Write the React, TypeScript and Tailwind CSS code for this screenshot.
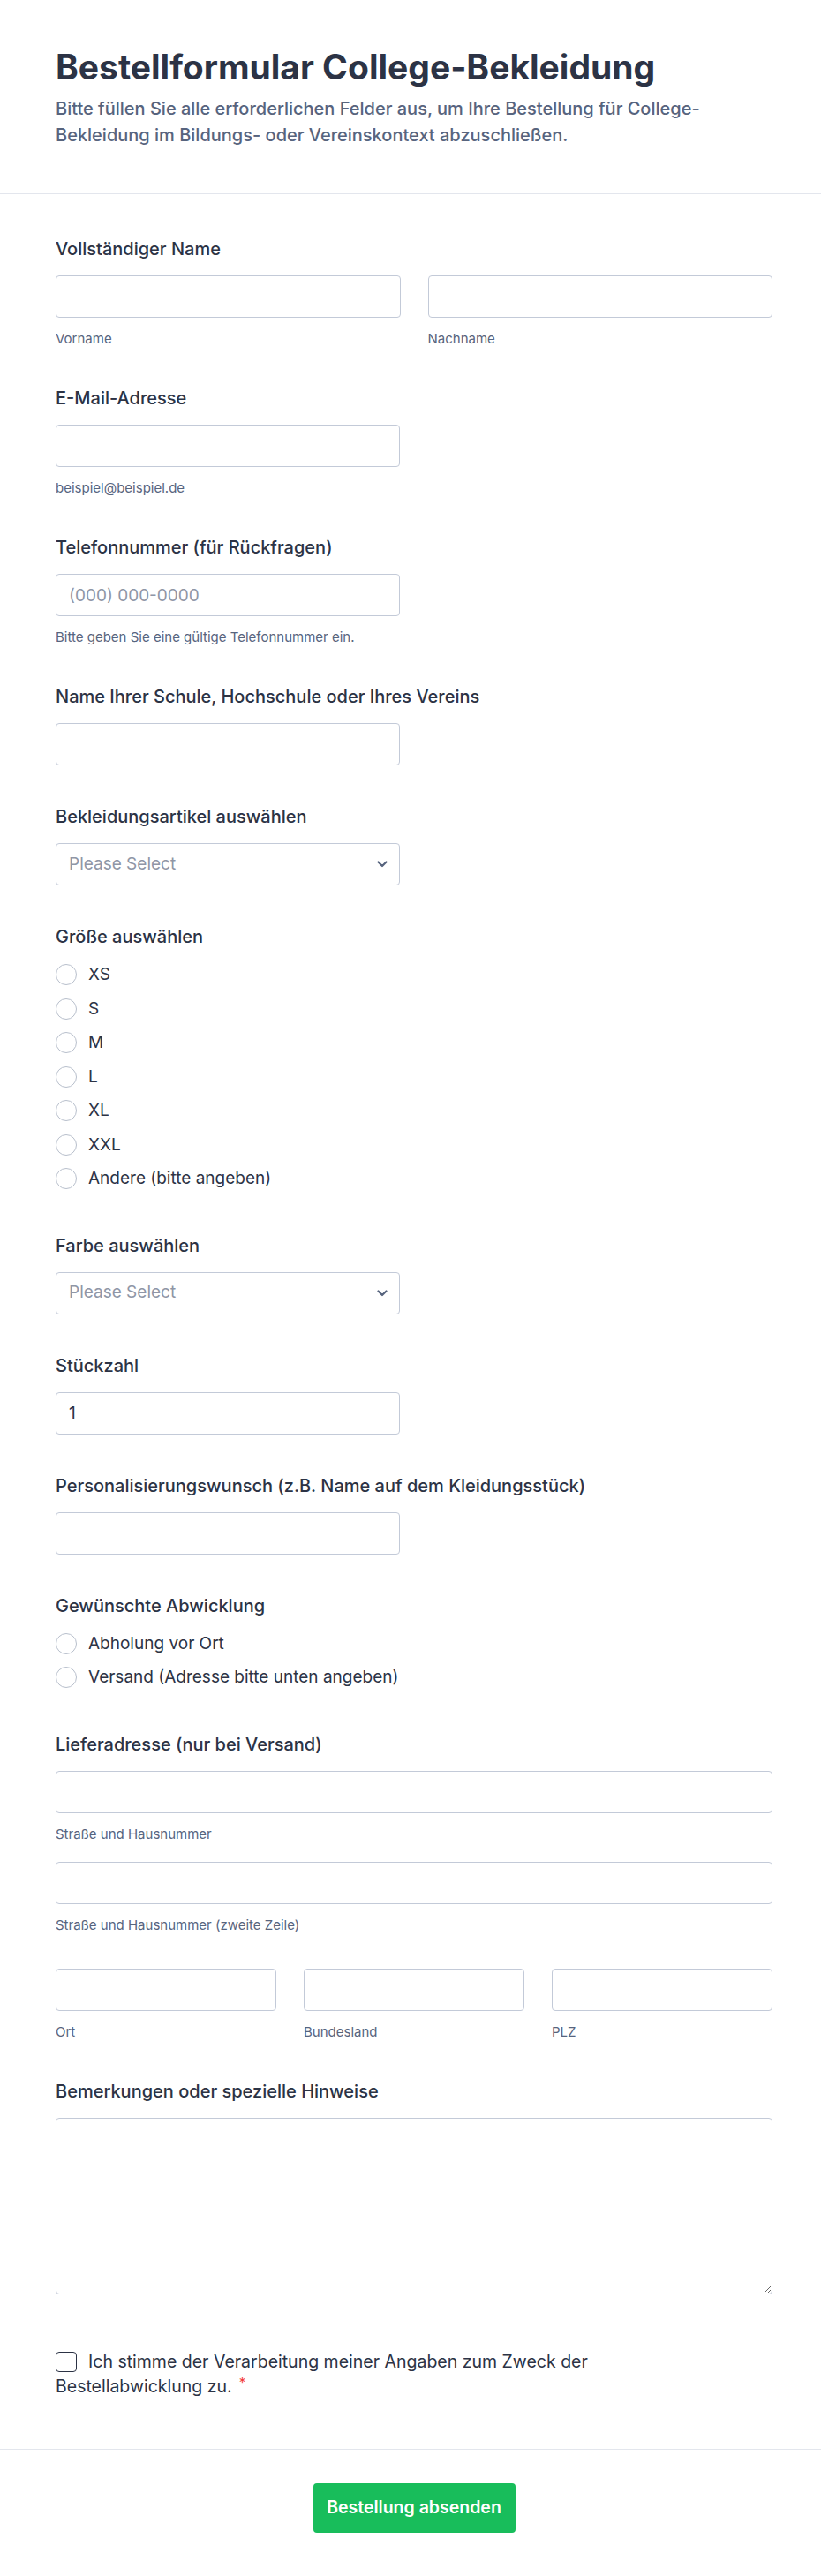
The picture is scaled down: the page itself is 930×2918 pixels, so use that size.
import React from 'react';

const Label = ({ children }: { children: React.ReactNode }) => (
  <div className="text-[20px] leading-6 font-medium text-[#2c3345]">{children}</div>
);

const Sub = ({ children }: { children: React.ReactNode }) => (
  <div className="mt-[15px] text-[15px] leading-[18px] text-[#57647e]">{children}</div>
);

const TextInput = ({
  placeholder,
  value,
  half,
}: {
  placeholder?: string;
  value?: string;
  half?: boolean;
}) => (
  <input
    type="text"
    placeholder={placeholder}
    defaultValue={value}
    className={`mt-[18px] block h-12 ${half ? 'w-[390px]' : 'w-full'} rounded-[4px] border border-[#c3cad8] bg-white px-[14px] text-[19px] text-[#2c3345] outline-none placeholder:text-[#8f96a6]`}
  />
);

const Select = () => (
  <div className="mt-[18px] flex h-12 w-[390px] items-center justify-between rounded-[4px] border border-[#c3cad8] bg-white pl-[14px] pr-[13px]">
    <span className="text-[19px] text-[#8f96a6]">Please Select</span>
    <svg width="12" height="8" viewBox="0 0 12 8" fill="none">
      <path d="M1.5 1.5 L6 6 L10.5 1.5" stroke="#57647e" strokeWidth="2.2" strokeLinecap="round" strokeLinejoin="round" />
    </svg>
  </div>
);

const Radio = ({ label }: { label: string }) => (
  <div className="flex h-[38.5px] items-center gap-[13px]">
    <span className="h-6 w-6 shrink-0 rounded-full border border-[#b8bfcc] bg-white" />
    <span className="text-[19px] text-[#2c3345]">{label}</span>
  </div>
);

const sizes = ['XS', 'S', 'M', 'L', 'XL', 'XXL', 'Andere (bitte angeben)'];

export default function App() {
  return (
    <div className="min-h-screen bg-white font-['Inter','Noto_Sans',sans-serif] antialiased">
      <header className="border-b border-[#e3e6ed] pt-[54px] pb-[51px]">
        <div className="ml-[63px] w-[812px]">
          <h1 className="text-[39px] leading-[44px] font-bold text-[#2c3345]">
            Bestellformular College-Bekleidung
          </h1>
          <p className="mt-[10px] text-[20px] leading-[30px] font-medium text-[#57647e]">
            Bitte füllen Sie alle erforderlichen Felder aus, um Ihre Bestellung für College-Bekleidung im
            Bildungs- oder Vereinskontext abzuschließen.
          </p>
        </div>
      </header>

      <form className="pt-[50px] pb-[57px]">
        <div className="ml-[63px] w-[812px]">
          <div className="mb-[46px]">
            <Label>Vollständiger Name</Label>
            <div className="grid grid-cols-2 gap-x-[31px]">
              <div>
                <TextInput />
                <Sub>Vorname</Sub>
              </div>
              <div>
                <TextInput />
                <Sub>Nachname</Sub>
              </div>
            </div>
          </div>

          <div className="mb-[46px]">
            <Label>E-Mail-Adresse</Label>
            <TextInput half />
            <Sub>beispiel@beispiel.de</Sub>
          </div>

          <div className="mb-[46px]">
            <Label>Telefonnummer (für Rückfragen)</Label>
            <TextInput half placeholder="(000) 000-0000" />
            <Sub>Bitte geben Sie eine gültige Telefonnummer ein.</Sub>
          </div>

          <div className="mb-[46px]">
            <Label>Name Ihrer Schule, Hochschule oder Ihres Vereins</Label>
            <TextInput half />
          </div>

          <div className="mb-[46px]">
            <Label>Bekleidungsartikel auswählen</Label>
            <Select />
          </div>

          <div className="mb-[44px]">
            <Label>Größe auswählen</Label>
            <div className="mt-[12px]">
              {sizes.map((s) => (
                <Radio key={s} label={s} />
              ))}
            </div>
          </div>

          <div className="mb-[46px]">
            <Label>Farbe auswählen</Label>
            <Select />
          </div>

          <div className="mb-[46px]">
            <Label>Stückzahl</Label>
            <TextInput half value="1" />
          </div>

          <div className="mb-[46px]">
            <Label>Personalisierungswunsch (z.B. Name auf dem Kleidungsstück)</Label>
            <TextInput half />
          </div>

          <div className="mb-[44px]">
            <Label>Gewünschte Abwicklung</Label>
            <div className="mt-[12px]">
              <Radio label="Abholung vor Ort" />
              <Radio label="Versand (Adresse bitte unten angeben)" />
            </div>
          </div>

          <div className="mb-[46px]">
            <Label>Lieferadresse (nur bei Versand)</Label>
            <TextInput />
            <Sub>Straße und Hausnummer</Sub>
            <div className="mt-[22px]">
              <TextInput />
              <Sub>Straße und Hausnummer (zweite Zeile)</Sub>
            </div>
            <div className="mt-[22px] grid grid-cols-3 gap-x-[31px]">
              <div>
                <TextInput />
                <Sub>Ort</Sub>
              </div>
              <div>
                <TextInput />
                <Sub>Bundesland</Sub>
              </div>
              <div>
                <TextInput />
                <Sub>PLZ</Sub>
              </div>
            </div>
          </div>

          <div className="mb-[60px]">
            <Label>Bemerkungen oder spezielle Hinweise</Label>
            <textarea className="mt-[18px] block h-[200px] w-full rounded-[4px] border border-[#c3cad8] bg-white px-[14px] py-[10px] text-[18px] text-[#2c3345] outline-none" />
          </div>

          <label className="block max-w-[680px] text-[19.5px] leading-[28px] text-[#2c3345]">
            <span className="mr-[13px] inline-block h-[23px] w-6 translate-y-[5px] rounded-[4px] border-[1.5px] border-[#2c3345] bg-white align-baseline" />
            Ich stimme der Verarbeitung meiner Angaben zum Zweck der Bestellabwicklung zu.
            <span className="ml-[8px] align-top text-[15px] leading-[20px] text-[#f23a3c]">*</span>
          </label>
        </div>
      </form>

      <footer className="border-t border-[#e3e6ed] pt-[38px] pb-[52px]">
        <div className="ml-[63px] flex w-[812px] justify-center">
          <button
            type="button"
            className="h-14 w-[229px] rounded-[4px] bg-[#18bd5b] text-[19.5px] font-semibold text-white"
          >
            Bestellung absenden
          </button>
        </div>
      </footer>
    </div>
  );
}
